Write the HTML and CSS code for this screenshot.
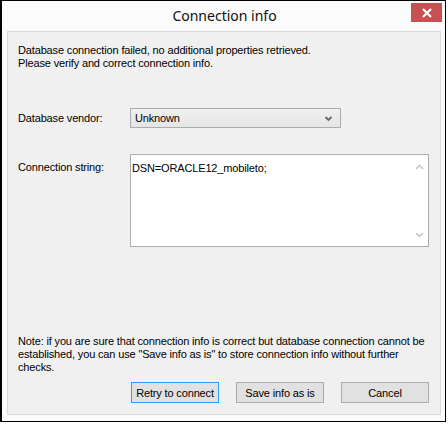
FILE: index.html
```html
<!DOCTYPE html>
<html>
<head>
<meta charset="utf-8">
<link rel="stylesheet" href="styles.css">
</head>
<body>
<div class="window">
  <div class="titlebar">
    <div class="spacer"></div>
    <div class="title">Connection info</div>
    <div class="close">
      <svg width="12" height="10" viewBox="0 0 12 10"><path d="M2 1 L10 9 M10 1 L2 9" stroke="#fff" stroke-width="2.2" fill="none"/></svg>
    </div>
  </div>
  <div class="panel">
    <div class="msg">Database connection failed, no additional properties retrieved.<br>Please verify and correct connection info.</div>
    <div class="row vendor-row">
      <div class="label">Database vendor:</div>
      <div class="select">
        <span>Unknown</span>
        <svg width="9" height="7" viewBox="0 0 9 7"><path d="M1.5 2 L4.5 5 L7.5 2" stroke="#666" stroke-width="1.8" fill="none"/></svg>
      </div>
    </div>
    <div class="row conn-row">
      <div class="label">Connection string:</div>
      <div class="textbox">
        <div class="tb-text">DSN=ORACLE12_mobileto;</div>
        <div class="scroll">
          <svg width="9" height="6" viewBox="0 0 9 6"><path d="M1 5 L4.5 1.5 L8 5" stroke="#c2c2c2" stroke-width="1.4" fill="none"/></svg>
          <svg width="9" height="6" viewBox="0 0 9 6"><path d="M1 1 L4.5 4.5 L8 1" stroke="#c2c2c2" stroke-width="1.4" fill="none"/></svg>
        </div>
      </div>
    </div>
    <div class="fill"></div>
    <div class="note">Note: if you are sure that connection info is correct but database connection cannot be established, you can use "Save info as is" to store connection info without further checks.</div>
    <div class="buttons">
      <div class="btn default">Retry to connect</div>
      <div class="btn">Save info as is</div>
      <div class="btn">Cancel</div>
    </div>
  </div>
</div>
</body>
</html>
```
FILE: styles.css
```css
html, body {
  margin: 0;
  padding: 0;
  background: #fff;
}
body {
  width: 448px;
  height: 424px;
  overflow: hidden;
  font-family: "Liberation Sans", Arial, sans-serif;
  font-size: 11px;
  letter-spacing: -0.15px;
  color: #000;
}
.window {
  width: 443px;
  height: 420px;
  border-top: 1px solid #000;
  border-left: 2px solid #000;
  border-right: 1px solid #000;
  border-bottom: 1px solid #000;
  background: #fbfbfb;
  display: flex;
  flex-direction: column;
}
.titlebar {
  height: 30px;
  display: flex;
  align-items: flex-start;
}
.spacer {
  width: 40px;
}
.title {
  flex: 1;
  text-align: center;
  font-family: "Noto Sans", "Open Sans", sans-serif;
  font-size: 14px;
  letter-spacing: 0;
  line-height: 30px;
  color: #111;
  padding-left: 2px;
}
.close {
  width: 31px;
  height: 19px;
  margin-top: 2px;
  margin-right: 3px;
  margin-left: 6px;
  background: #c75050;
  display: flex;
  align-items: center;
  justify-content: center;
}
.panel {
  flex: 1;
  margin: 0 4px 6px 5px;
  border: 1px solid #dadada;
  background: #f0f0f0;
  display: flex;
  flex-direction: column;
  padding: 12px 0 11px 10px;
}
.msg {
  line-height: 13px;
}
.row {
  display: flex;
}
.label {
  width: 112px;
  flex: none;
}
.vendor-row {
  margin-top: 38px;
  align-items: center;
}
.select {
  height: 18px;
  border: 1px solid #acacac;
  background: linear-gradient(#f0f0f0, #e5e5e5);
  display: flex;
  align-items: center;
  justify-content: space-between;
  padding: 0 7px 0 4px;
  width: 198px;
}
.conn-row {
  margin-top: 26px;
}
.conn-row .label {
  padding-top: 7px;
}
.textbox {
  width: 297px;
  height: 91px;
  border: 1px solid #abadb3;
  background: #fff;
  display: flex;
}
.tb-text {
  flex: 1;
  padding: 7px 0 0 1px;
}
.scroll {
  width: 17px;
  display: flex;
  flex-direction: column;
  justify-content: space-between;
  align-items: center;
  padding: 9px 0 8px;
}
.fill {
  flex: 1;
}
.note {
  line-height: 13px;
  padding-right: 10px;
}
.buttons {
  display: flex;
  gap: 17px;
  margin-top: 8px;
  padding-left: 113px;
}
.btn {
  width: 86px;
  height: 19px;
  border: 1px solid #adadad;
  background: #e1e1e1;
  display: flex;
  align-items: center;
  justify-content: center;
  font-size: 11px;
}
.btn.default {
  border-color: #3399ff;
}
```
